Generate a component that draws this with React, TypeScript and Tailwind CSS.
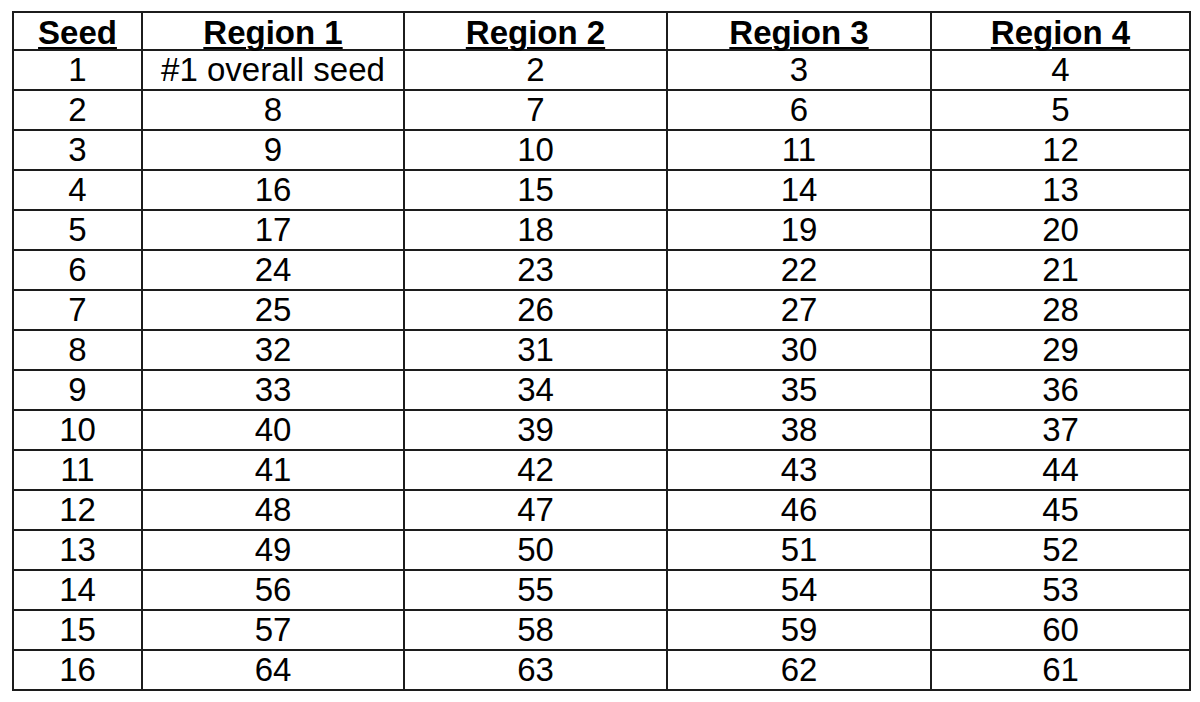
import React from 'react';

const regions = ['Region 1', 'Region 2', 'Region 3', 'Region 4'];

// snake seeding: region 1 gets 1, 8, 9, 16, ... region 4 gets 4, 5, 12, 13, ...
const rows = Array.from({ length: 16 }, (_, i) => {
  const seed = i + 1;
  const vals = [0, 1, 2, 3].map((r) => (i % 2 === 0 ? i * 4 + r + 1 : i * 4 + 4 - r));
  return { seed, vals: vals.map((v, r) => (seed === 1 && r === 0 ? '#1 overall seed' : String(v))) };
});

const colWidths = ['w-[129px]', 'w-[262px]', 'w-[263px]', 'w-[264px]', 'w-[259px]'];

const App = () => {
  return (
    <div className="min-h-screen bg-white pt-[11px] pl-[12px] text-black" style={{ fontFamily: '"Liberation Sans", Arial, sans-serif' }}>
      <div className="inline-flex flex-col border-l-2 border-t-2 border-[#1c1c1c]">
        <div className="flex">
          {['Seed', ...regions].map((h, c) => (
            <div
              key={h}
              className={`${colWidths[c]} h-[38px] pt-[2px] border-r-2 border-b-2 border-[#1c1c1c] text-center text-[33px] leading-[36px] font-bold`}
            >
              <span className="underline decoration-2 underline-offset-[3px]">{h}</span>
            </div>
          ))}
        </div>
        {rows.map((row) => (
          <div key={row.seed} className="flex">
            {[String(row.seed), ...row.vals].map((v, c) => (
              <div
                key={c}
                className={`${colWidths[c]} h-[40px] border-r-2 border-b-2 border-[#1c1c1c] text-center text-[33px] leading-[38px]`}
              >
                {v}
              </div>
            ))}
          </div>
        ))}
      </div>
    </div>
  );
};

export default App;
